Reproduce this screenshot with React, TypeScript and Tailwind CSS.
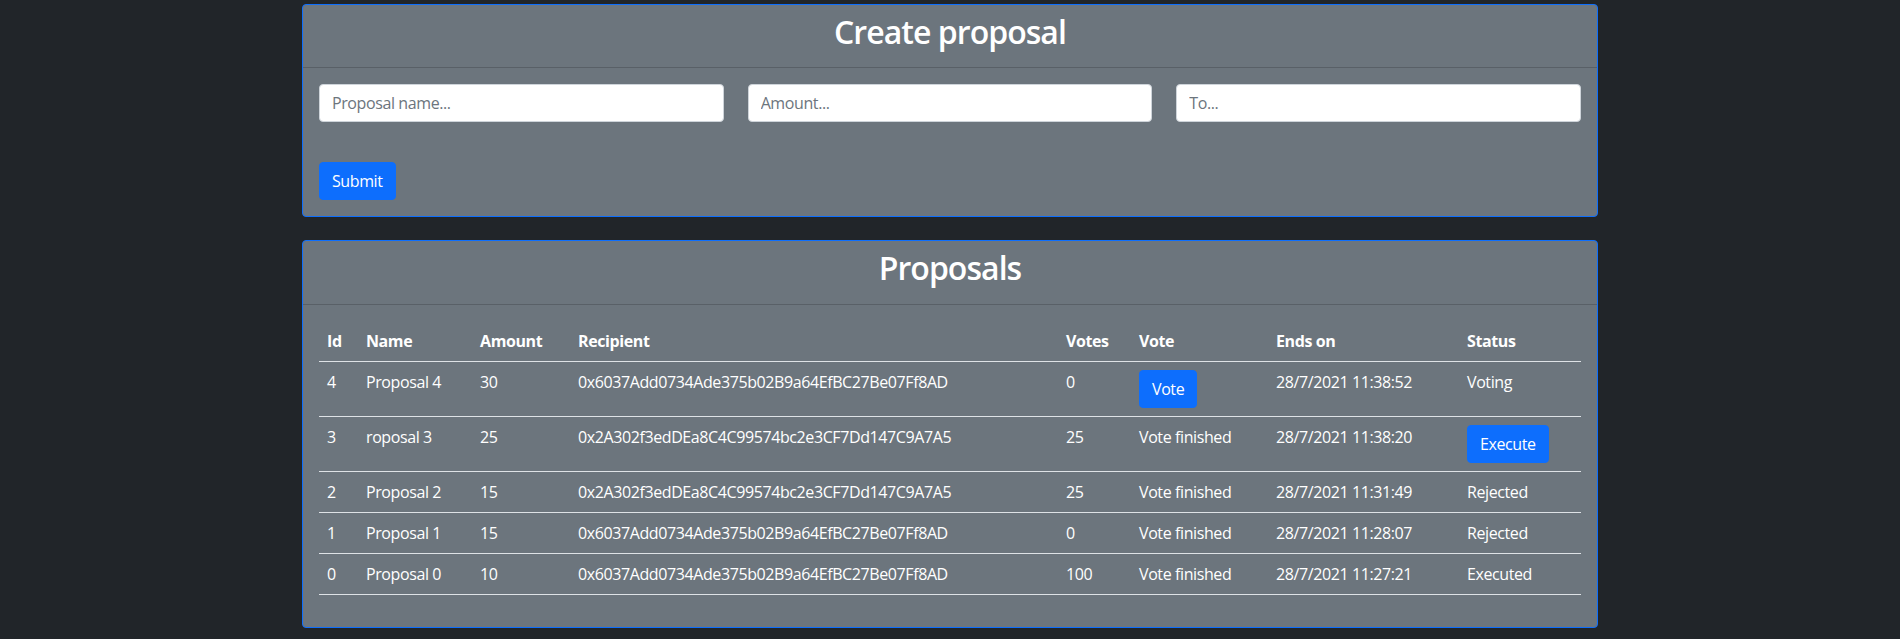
import React, { useState } from 'react';

type Proposal = {
    id: number;
    name: string;
    amount: number;
    recipient: string;
    votes: number;
    voting: boolean;
    endsOn: string;
    status: 'Voting' | 'Execute' | 'Rejected' | 'Executed';
};

const proposals: Proposal[] = [
    { id: 4, name: 'Proposal 4', amount: 30, recipient: '0x6037Add0734Ade375b02B9a64EfBC27Be07Ff8AD', votes: 0, voting: true, endsOn: '28/7/2021 11:38:52', status: 'Voting' },
    { id: 3, name: 'roposal 3', amount: 25, recipient: '0x2A302f3edDEa8C4C99574bc2e3CF7Dd147C9A7A5', votes: 25, voting: false, endsOn: '28/7/2021 11:38:20', status: 'Execute' },
    { id: 2, name: 'Proposal 2', amount: 15, recipient: '0x2A302f3edDEa8C4C99574bc2e3CF7Dd147C9A7A5', votes: 25, voting: false, endsOn: '28/7/2021 11:31:49', status: 'Rejected' },
    { id: 1, name: 'Proposal 1', amount: 15, recipient: '0x6037Add0734Ade375b02B9a64EfBC27Be07Ff8AD', votes: 0, voting: false, endsOn: '28/7/2021 11:28:07', status: 'Rejected' },
    { id: 0, name: 'Proposal 0', amount: 10, recipient: '0x6037Add0734Ade375b02B9a64EfBC27Be07Ff8AD', votes: 100, voting: false, endsOn: '28/7/2021 11:27:21', status: 'Executed' },
];

const btn = "block h-[38px] px-3 rounded border border-[#0d6efd] bg-[#0d6efd] text-white text-base leading-6";
const input = "w-full h-[38px] px-3 rounded border border-[#ced4da] bg-white text-base text-[#212529] placeholder:text-[#6c757d] outline-none";
const th = "p-2 text-left font-bold border-b border-[#dee2e6]";
const td = "p-2 align-top border-b border-[#dee2e6]";

const CardHeader: React.FC<{ title: string }> = ({ title }) => (
    <div className="px-4 py-2 border-b border-black/[.175]">
        <h2 className="text-[32px] font-semibold tracking-[-0.03em] leading-[1.2] mb-2 text-center">{title}</h2>
    </div>
);

const App = () => {
    const [form, setForm] = useState({ name: '', amount: '', to: '' });
    const handleChange = (e: React.ChangeEvent<HTMLInputElement>) => setForm({ ...form, [e.target.name]: e.target.value });

    return (
        <div className="min-h-screen bg-[#212529] text-white text-base leading-6 tracking-[-0.025em]" style={{ fontFamily: '"Open Sans", "Noto Sans", sans-serif' }}>
            <div className="w-[1320px] mx-auto px-3 pt-1">
                <div className="bg-[#6c757d] border border-[#0d6efd] rounded">
                    <CardHeader title="Create proposal" />
                    <form className="p-4" onSubmit={e => e.preventDefault()}>
                        <div className="grid grid-cols-3 gap-x-6">
                            <input name="name" value={form.name} onChange={handleChange} placeholder="Proposal name..." className={input} />
                            <input name="amount" value={form.amount} onChange={handleChange} placeholder="Amount..." className={input} />
                            <input name="to" value={form.to} onChange={handleChange} placeholder="To..." className={input} />
                        </div>
                        <button type="submit" className={`${btn} mt-10`}>Submit</button>
                    </form>
                </div>

                <div className="mt-[23px] bg-[#6c757d] border border-[#0d6efd] rounded">
                    <CardHeader title="Proposals" />
                    <div className="p-4">
                        <table className="w-full table-fixed border-collapse mb-4">
                            <thead>
                                <tr>
                                    <th className={`${th} w-[39px]`}>Id</th>
                                    <th className={`${th} w-[114px]`}>Name</th>
                                    <th className={`${th} w-[98px]`}>Amount</th>
                                    <th className={`${th} w-[488px]`}>Recipient</th>
                                    <th className={`${th} w-[73px]`}>Votes</th>
                                    <th className={`${th} w-[137px]`}>Vote</th>
                                    <th className={`${th} w-[191px]`}>Ends on</th>
                                    <th className={`${th} w-[122px]`}>Status</th>
                                </tr>
                            </thead>
                            <tbody>
                                {proposals.map(p => (
                                    <tr key={p.id}>
                                        <td className={td}>{p.id}</td>
                                        <td className={td}>{p.name}</td>
                                        <td className={td}>{p.amount}</td>
                                        <td className={`${td} whitespace-nowrap`}>{p.recipient}</td>
                                        <td className={td}>{p.votes}</td>
                                        <td className={td}>{p.voting ? <button className={btn}>Vote</button> : 'Vote finished'}</td>
                                        <td className={`${td} whitespace-nowrap`}>{p.endsOn}</td>
                                        <td className={td}>{p.status === 'Execute' ? <button className={btn}>Execute</button> : p.status}</td>
                                    </tr>
                                ))}
                            </tbody>
                        </table>
                    </div>
                </div>
            </div>
        </div>
    );
};

export default App;
